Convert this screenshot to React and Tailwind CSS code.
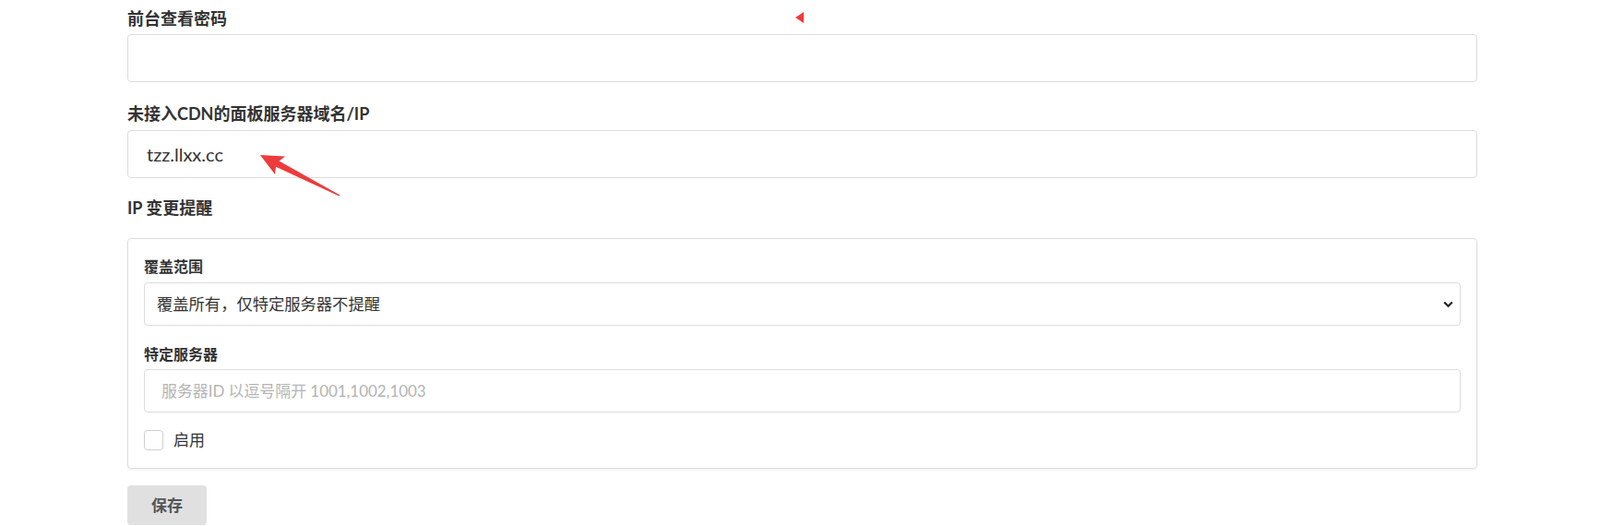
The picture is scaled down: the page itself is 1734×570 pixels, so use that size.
import React from 'react';

const field =
  'block w-full border border-[#dcdcdc] rounded-[4px] bg-white text-[#333] outline-none';

export default function App() {
  return (
    <div className="relative min-h-[570px] overflow-hidden bg-white font-[Lato,'Noto_Sans_CJK_SC',sans-serif] text-[#333]">
      <div className="ml-[138px] w-[1463px] pt-[7px]">
        <label className="block text-[18px] leading-[26px] font-bold">前台查看密码</label>
        <input type="text" className={`${field} mt-[4px] h-[52px] px-[20px] text-[20px]`} />

        <label className="mt-[21px] block text-[18px] leading-[26px] font-bold">
          未接入CDN的面板服务器域名/IP
        </label>
        <input
          type="text"
          readOnly
          value="tzz.llxx.cc"
          className={`${field} mt-[5px] h-[52px] px-[20px] text-[20px]`}
        />

        <div className="mt-[19px] text-[18px] leading-[26px] font-bold">IP 变更提醒</div>

        {/* Card */}
        <div className="mt-[20px] rounded-[4px] border border-[#dedede] px-[17px] pt-[18px] pb-[19px] shadow-[0_1px_3px_rgba(0,0,0,0.08)]">
          <div className="text-[16px] leading-[24px] font-bold">覆盖范围</div>
          <div className="mt-[5px] flex h-[47px] items-center justify-between rounded-[4px] border border-[#dcdcdc] pl-[13px] pr-[7px]">
            <span className="text-[17.3px] leading-none">覆盖所有，仅特定服务器不提醒</span>
            <svg width="11" height="8" viewBox="0 0 11 8" fill="none">
              <path d="M1.2 1.5 L5.5 5.8 L9.8 1.5" stroke="#222" strokeWidth="2.2" />
            </svg>
          </div>

          <div className="mt-[19px] text-[16px] leading-[24px] font-bold">特定服务器</div>
          <input
            type="text"
            placeholder="服务器ID 以逗号隔开 1001,1002,1003"
            className={`${field} mt-[4px] h-[47px] px-[18px] text-[16.9px] placeholder:text-[#b4b4b4]`}
          />

          <label className="mt-[19px] flex items-center gap-[11px]">
            <span className="h-[22px] w-[21px] rounded-[4px] border border-[#cfcfcf] bg-white" />
            <span className="text-[17px] leading-[22px]">启用</span>
          </label>
        </div>

        <button className="mt-[18px] h-[43px] w-[86px] rounded-[4px] bg-[#e0e0e0] text-[17px] font-bold text-[#555]">
          保存
        </button>
      </div>

      {/* annotation marks */}
      <svg className="pointer-events-none absolute left-0 top-0" width="1734" height="570">
        <polygon points="862,19 871,13 871,25" fill="#ee3b3b" />
        <polygon
          points="282,168 309,169.5 302.5,174.5 368.5,211.5 367.5,212.5 299,180.7 298,189"
          fill="#ee3b3b"
        />
      </svg>
    </div>
  );
}
